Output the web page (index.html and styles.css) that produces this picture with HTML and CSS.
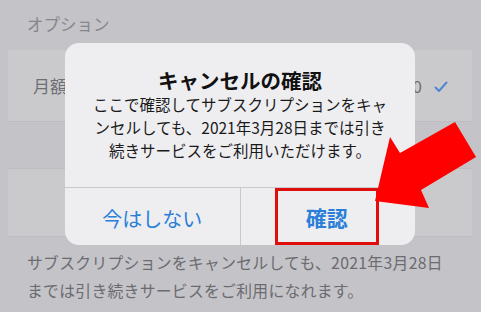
FILE: index.html
```html
<!DOCTYPE html>
<html>
<head>
  <link rel="stylesheet" href="styles.css">
</head>
<body>
  <div class="settings">
    <p class="section-title">オプション</p>
    <div class="row">
      <span class="row-label">月額プラン</span>
      <span class="row-price">¥250</span>
      <svg class="check" width="14" height="12" viewBox="0 0 14 12"><polyline points="1.5,6.5 5,10 12.5,1.5" fill="none" stroke="#4f86d0" stroke-width="2" stroke-linecap="round" stroke-linejoin="round"/></svg>
    </div>
    <div class="row row-second"></div>
    <p class="note">サブスクリプションをキャンセルしても、2021年3月28日<br>までは引き続きサービスをご利用になれます。</p>
  </div>

  <div class="dialog">
    <div class="dialog-body">
      <h2 class="dialog-title">キャンセルの確認</h2>
      <p class="dialog-text">ここで確認してサブスクリプションをキャ<br>ンセルしても、2021年3月28日までは引き<br>続きサービスをご利用いただけます。</p>
    </div>
    <div class="dialog-actions">
      <button class="action action-later">今はしない</button>
      <button class="action action-main"><span class="highlight">確認</span></button>
    </div>
  </div>

  <!-- annotation arrow -->
  <svg class="arrow" width="481" height="312" viewBox="0 0 481 312">
    <polygon points="375,201 390,137 400,153 455,122 476,157 421,190 429,208" fill="#fe0000"/>
  </svg>
</body>
</html>
```

FILE: styles.css
```css
body {
  margin: 0;
  width: 481px;
  height: 312px;
  overflow: hidden;
  position: relative;
  background-color: #c3c3c8;
  font-family: "Noto Sans CJK JP", "Noto Sans", sans-serif;
}

.settings {
  padding: 11px 9px 0 8px;
  display: flex;
  flex-direction: column;
}

.section-title {
  margin: 0 0 12px 19px;
  font-size: 16.5px;
  line-height: 27px;
  color: #86868b;
}

.row {
  height: 71px;
  background-color: #cacacd;
  border-bottom: 1px solid #bdbdc1;
  display: flex;
  align-items: center;
  padding: 0 24px 0 25px;
}

.row-label {
  font-size: 17px;
  color: #6e6e73;
  flex: 1;
}

.row-price {
  font-size: 17px;
  color: #6e6e73;
  margin-right: 12px;
}

.check {
  margin-top: 2px;
}

.row-second {
  margin-top: 46px;
  height: 67px;
  border-top: 1px solid #bdbdc1;
}

.note {
  margin: 12px 0 0 19px;
  font-size: 15.8px;
  line-height: 28px;
  letter-spacing: 0.3px;
  color: #6b6b70;
}

.dialog {
  position: absolute;
  left: 65px;
  top: 43px;
  width: 350px;
  height: 202px;
  border-radius: 14px;
  background-color: #eeeef1;
  display: flex;
  flex-direction: column;
  overflow: hidden;
}

.dialog-body {
  padding: 24px 10px 0;
  height: 121px;
  text-align: center;
  border-bottom: 1px solid #c9c9cd;
}

.dialog-title {
  margin: 0;
  font-size: 20.5px;
  line-height: 26px;
  font-weight: bold;
  color: #111;
}

.dialog-text {
  margin: 0;
  font-size: 15.5px;
  line-height: 23px;
  color: #1a1a1a;
}

.dialog-actions {
  flex: 1;
  display: flex;
}

.action {
  flex: 1;
  border: none;
  background: none;
  padding: 0;
  margin: 0;
  font-family: inherit;
  font-size: 20px;
  color: #2a7fd8;
  display: flex;
  align-items: center;
  justify-content: center;
}

.action-later {
  padding-top: 4px;
}

.action + .action {
  border-left: 1px solid #c9c9cd;
}

.action-main {
  font-weight: bold;
  font-size: 21px;
}

.highlight {
  width: 98px;
  height: 51px;
  border: 3px solid #e00d0d;
  display: flex;
  align-items: center;
  justify-content: center;
  margin: 0 2px 0 0;
}

.arrow {
  position: absolute;
  left: 0;
  top: 0;
}
```
